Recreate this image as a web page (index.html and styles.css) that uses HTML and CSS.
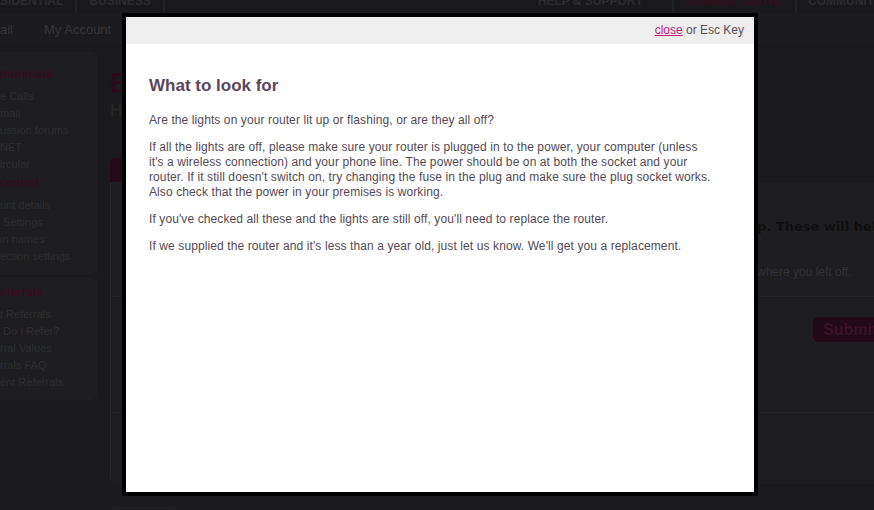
FILE: index.html
```html
<!DOCTYPE html>
<html lang="en">
<head>
<meta charset="utf-8">
<title>What to look for</title>
<link rel="stylesheet" href="styles.css">
</head>
<body>
<div class="page">
  <header class="topbar">
    <nav class="tnav tnav-left">
      <a class="first">SIDENTIAL</a><span class="sep"></span><a>BUSINESS</a><span class="sep"></span>
    </nav>
    <nav class="tnav tnav-right">
      <a class="help">HELP &amp; SUPPORT</a><span class="sep"></span><a class="member">MEMBER CENTRE</a><span class="sep"></span><a class="comm">COMMUNITY</a>
    </nav>
  </header>
  <nav class="subnav">
    <a>ail</a>
    <a>My Account</a>
  </nav>
  <div class="layout">
    <aside class="sidebar">
      <div class="sidebox">
        <h3 class="side-title">municate</h3>
        <ul class="side-list">
          <li>e Calls</li>
          <li>mail</li>
          <li>ussion forums</li>
          <li>NET</li>
          <li>ircular</li>
        </ul>
        <h3 class="side-title side-title-next">ccount</h3>
        <ul class="side-list">
          <li>unt details</li>
          <li> Settings</li>
          <li>in names</li>
          <li>ection settings</li>
        </ul>
      </div>
      <div class="sidebox sidebox-2">
        <h3 class="side-title">eferrals</h3>
        <ul class="side-list">
          <li>t Referrals</li>
          <li> Do I Refer?</li>
          <li>rral Values</li>
          <li>rrals FAQ</li>
          <li>ent Referrals</li>
        </ul>
      </div>
    </aside>
    <main class="content">
      <h1 class="page-title">Broadband Help</h1>
      <h2 class="page-sub">Help with your connection</h2>
      <div class="tabrow"><span class="tab"></span></div>
      <section class="panel">
        <p class="panel-lead">p. These will help us</p>
        <p class="panel-note">where you left off.</p>
        <hr class="panel-rule">
        <button class="submit" type="button">Submit</button>
        <hr class="panel-rule panel-rule-low">
      </section>
      <div class="footer-tab"></div>
    </main>
  </div>
</div>

<div class="modal">
  <div class="modal-bar"><a class="close-link" href="#">close</a> or Esc Key</div>
  <div class="modal-body">
    <div class="modal-content">
      <h2 class="modal-title">What to look for</h2>
      <p>Are the lights on your router lit up or flashing, or are they all off?</p>
      <p>If all the lights are off, please make sure your router is plugged in to the power, your computer (unless it's a wireless connection) and your phone line. The power should be on at both the socket and your router. If it still doesn't switch on, try changing the fuse in the plug and make sure the plug socket works. Also check that the power in your premises is working.</p>
      <p>If you've checked all these and the lights are still off, you'll need to replace the router.</p>
      <p>If we supplied the router and it's less than a year old, just let us know. We'll get you a replacement.</p>
    </div>
  </div>
</div>
</body>
</html>
```

FILE: styles.css
```css
html, body {
  margin: 0;
  padding: 0;
}
body {
  width: 874px;
  height: 510px;
  overflow: hidden;
  background: #1b1b1d;
  font-family: "Liberation Sans", Arial, sans-serif;
}
.page {
  width: 874px;
}

/* top bar */
.topbar {
  height: 13px;
  background: #19191b;
  display: flex;
  overflow: hidden;
}
.tnav {
  display: flex;
  flex-shrink: 0;
}
.tnav a {
  font-weight: bold;
  font-size: 12px;
  line-height: 16px;
  margin-top: -7px;
  padding: 0 12px;
  color: #2c2c2e;
  white-space: nowrap;
}
.tnav a.first { padding-left: 0; }
.sep {
  width: 2px;
  background: #222224;
}
.tnav-right {
  margin-left: 361px;
}
.tnav a.help { padding-right: 29px; }
.tnav a.member {
  color: #360d1c;
  font-size: 11px;
}
.tnav a.comm { padding-left: 11px; }

/* sub nav */
.subnav {
  height: 32px;
  display: flex;
  gap: 31px;
  background: #1c1c1e;
}
.subnav a {
  font-size: 13px;
  line-height: 33px;
  color: #36363a;
}

/* layout */
.layout {
  display: flex;
  gap: 13px;
  margin-top: 7px;
}
.sidebar {
  width: 97px;
  flex-shrink: 0;
}
.sidebox {
  background: #1e1e20;
  border: 1px solid #202022;
  border-left: none;
  border-radius: 0 6px 6px 0;
  padding: 13px 0 8px;
}
.sidebox-2 {
  margin-top: 4px;
  padding-top: 5px;
}
.side-title {
  margin: 0 0 5px;
  font-size: 12px;
  line-height: 17px;
  font-weight: bold;
  color: #350e1c;
  white-space: nowrap;
}
.side-title-next {
  margin-top: 2px;
}
.side-list {
  list-style: none;
  margin: 0;
  padding: 0;
}
.side-list li {
  font-size: 11px;
  line-height: 17px;
  color: #2e2e31;
  white-space: pre;
}

/* content */
.content {
  flex: 1;
  min-width: 0;
}
.page-title {
  margin: 15px 0 0;
  font-size: 28px;
  line-height: 32px;
  font-weight: bold;
  color: #2a0a1b;
  white-space: nowrap;
}
.page-sub {
  margin: 2px 0 0;
  font-size: 17px;
  line-height: 20px;
  font-weight: normal;
  color: #29292b;
  white-space: nowrap;
}
.tabrow {
  margin-top: 29px;
  height: 32px;
  background: #1a1a1c;
  display: flex;
  align-items: flex-end;
}
.tab {
  width: 130px;
  height: 24px;
  background: #240a18;
  border-radius: 6px 6px 0 0;
}
.panel {
  height: 303px;
  box-sizing: border-box;
  background: #1e1e20;
  border-left: 1px solid #262628;
  border-bottom: 1px solid #19191b;
  border-radius: 0 0 0 8px;
  padding: 37px 0 0 646px;
}
.panel-lead {
  margin: 0;
  font-family: "DejaVu Sans", Verdana, sans-serif;
  font-weight: bold;
  font-size: 13px;
  line-height: 16px;
  color: #0f0f10;
  white-space: nowrap;
}
.panel-note {
  margin: 30px 0 0;
  font-size: 12px;
  line-height: 15px;
  color: #333335;
  white-space: nowrap;
}
.panel-rule {
  margin: 16px 0 0 -646px;
  border: none;
  height: 1px;
  background: #262628;
}
.panel-rule-low {
  margin-top: 70px;
}
.submit {
  display: block;
  margin: 20px 0 0 56px;
  height: 25px;
  padding: 0 10px;
  border: none;
  border-radius: 6px;
  background: #220918;
  color: #3a1328;
  font-family: "Liberation Sans", Arial, sans-serif;
  font-weight: bold;
  font-size: 16px;
  line-height: 25px;
}
.footer-tab {
  margin: 22px 0 0 3px;
  width: 60px;
  height: 10px;
  border: 1px solid #222224;
  border-radius: 4px 4px 0 0;
}

/* modal */
.modal {
  position: fixed;
  left: 122px;
  top: 13px;
  width: 628px;
  height: 475px;
  border: 4px solid #000;
  background: #fff;
  display: flex;
  flex-direction: column;
}
.modal-bar {
  height: 27px;
  background: #eeeeee;
  text-align: right;
  padding-right: 10px;
  font-size: 12px;
  line-height: 27px;
  color: #555058;
}
.close-link {
  color: #cc1a7a;
  text-decoration: underline;
}
.modal-body {
  padding: 32px 23px;
}
.modal-content {
  width: 564px;
  color: #544a56;
  font-size: 12px;
  line-height: 15px;
  letter-spacing: 0.1px;
}
.modal-title {
  margin: 0 0 17px;
  font-size: 17px;
  line-height: 20px;
  font-weight: bold;
  color: #5b475c;
  letter-spacing: 0;
}
.modal-content p {
  margin: 0 0 12px;
}
```
